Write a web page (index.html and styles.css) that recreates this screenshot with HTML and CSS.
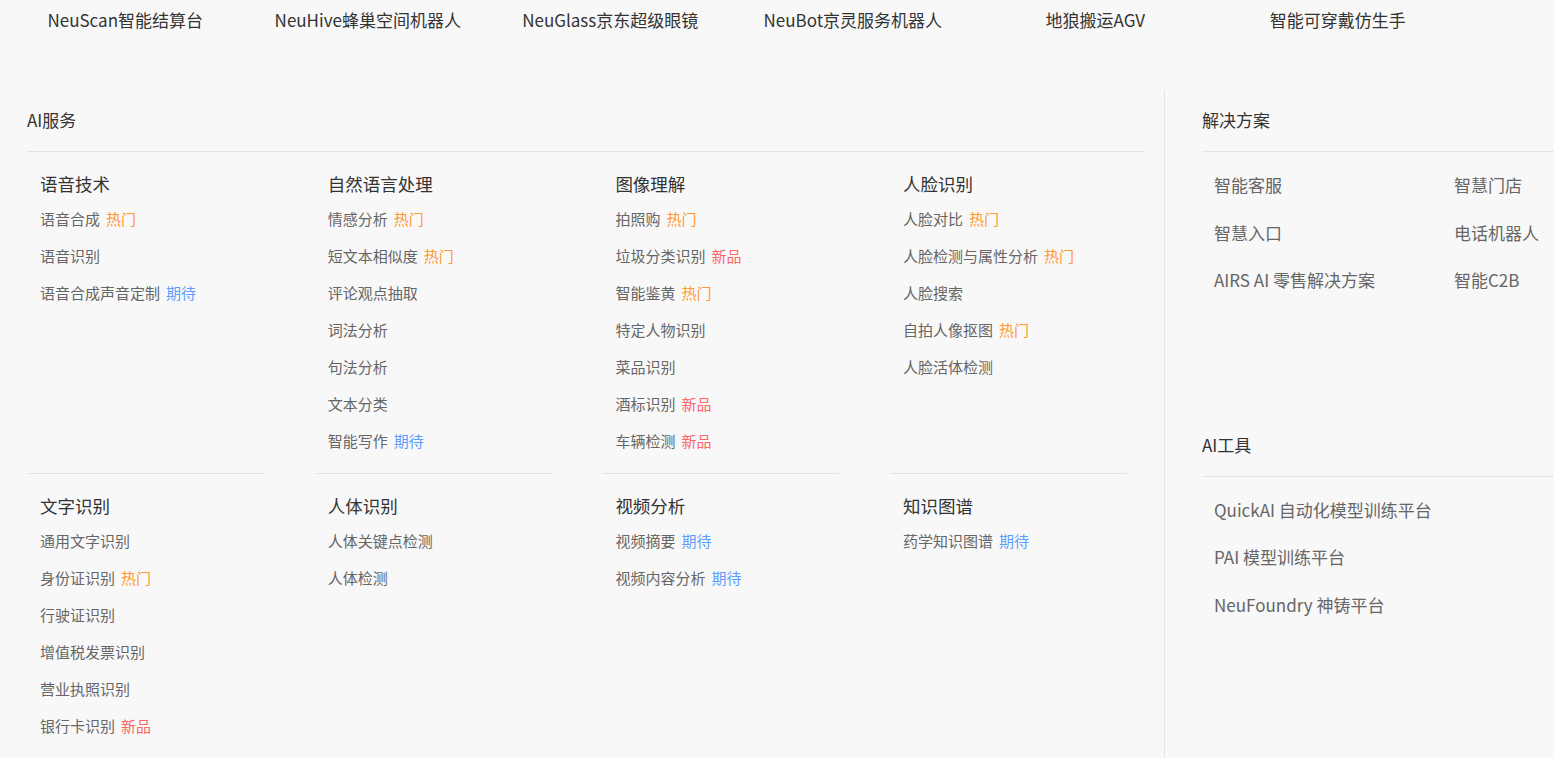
FILE: index.html
```html
<!DOCTYPE html>
<html lang="zh-CN">
<head>
<meta charset="utf-8">
<title>AI</title>
<link rel="stylesheet" href="styles.css">
</head>
<body>
<nav class="topnav">
  <a class="topnav-item">NeuScan智能结算台</a>
  <a class="topnav-item">NeuHive蜂巢空间机器人</a>
  <a class="topnav-item">NeuGlass京东超级眼镜</a>
  <a class="topnav-item">NeuBot京灵服务机器人</a>
  <a class="topnav-item">地狼搬运AGV</a>
  <a class="topnav-item">智能可穿戴仿生手</a>
</nav>
<main class="main">
  <section class="left">
    <h2 class="sec-title">AI服务</h2>
    <div class="grid">
      <div class="cell">
        <h3 class="cat">语音技术</h3>
        <ul class="list">
          <li>语音合成<span class="tag hot">热门</span></li>
          <li>语音识别</li>
          <li>语音合成声音定制<span class="tag wait">期待</span></li>
        </ul>
      </div>
      <div class="cell">
        <h3 class="cat">自然语言处理</h3>
        <ul class="list">
          <li>情感分析<span class="tag hot">热门</span></li>
          <li>短文本相似度<span class="tag hot">热门</span></li>
          <li>评论观点抽取</li>
          <li>词法分析</li>
          <li>句法分析</li>
          <li>文本分类</li>
          <li>智能写作<span class="tag wait">期待</span></li>
        </ul>
      </div>
      <div class="cell">
        <h3 class="cat">图像理解</h3>
        <ul class="list">
          <li>拍照购<span class="tag hot">热门</span></li>
          <li>垃圾分类识别<span class="tag new">新品</span></li>
          <li>智能鉴黄<span class="tag hot">热门</span></li>
          <li>特定人物识别</li>
          <li>菜品识别</li>
          <li>酒标识别<span class="tag new">新品</span></li>
          <li>车辆检测<span class="tag new">新品</span></li>
        </ul>
      </div>
      <div class="cell">
        <h3 class="cat">人脸识别</h3>
        <ul class="list">
          <li>人脸对比<span class="tag hot">热门</span></li>
          <li>人脸检测与属性分析<span class="tag hot">热门</span></li>
          <li>人脸搜索</li>
          <li>自拍人像抠图<span class="tag hot">热门</span></li>
          <li>人脸活体检测</li>
        </ul>
      </div>
    </div>
    <div class="grid grid-last">
      <div class="cell">
        <h3 class="cat">文字识别</h3>
        <ul class="list">
          <li>通用文字识别</li>
          <li>身份证识别<span class="tag hot">热门</span></li>
          <li>行驶证识别</li>
          <li>增值税发票识别</li>
          <li>营业执照识别</li>
          <li>银行卡识别<span class="tag new">新品</span></li>
        </ul>
      </div>
      <div class="cell">
        <h3 class="cat">人体识别</h3>
        <ul class="list">
          <li>人体关键点检测</li>
          <li>人体检测</li>
        </ul>
      </div>
      <div class="cell">
        <h3 class="cat">视频分析</h3>
        <ul class="list">
          <li>视频摘要<span class="tag wait">期待</span></li>
          <li>视频内容分析<span class="tag wait">期待</span></li>
        </ul>
      </div>
      <div class="cell">
        <h3 class="cat">知识图谱</h3>
        <ul class="list">
          <li>药学知识图谱<span class="tag wait">期待</span></li>
        </ul>
      </div>
    </div>
  </section>
  <aside class="right">
    <div class="block">
      <h2 class="sec-title">解决方案</h2>
      <ul class="links links-2col">
        <li>智能客服</li>
        <li>智慧门店</li>
        <li>智慧入口</li>
        <li>电话机器人</li>
        <li>AIRS AI 零售解决方案</li>
        <li>智能C2B</li>
      </ul>
    </div>
    <div class="block block-tools">
      <h2 class="sec-title">AI工具</h2>
      <ul class="links">
        <li>QuickAI 自动化模型训练平台</li>
        <li>PAI 模型训练平台</li>
        <li>NeuFoundry 神铸平台</li>
      </ul>
    </div>
  </aside>
</main>
</body>
</html>
```
FILE: styles.css
```css
html, body {
  margin: 0;
  padding: 0;
  background: #f8f8f8;
  overflow: hidden;
}
body {
  font-family: "Noto Sans CJK SC", "Noto Sans", sans-serif;
  color: #333;
  width: 1554px;
  height: 758px;
}
ul { list-style: none; margin: 0; padding: 0; }
h2, h3 { margin: 0; font-weight: normal; }

.topnav {
  display: flex;
  height: 40px;
  padding-left: 4px;
}
.topnav-item {
  width: 242.5px;
  flex: 0 0 auto;
  text-align: center;
  font-size: 17px;
  line-height: 40px;
  color: #333;
  white-space: nowrap;
}

.main {
  display: flex;
  margin-top: 50px;
  height: 668px;
}
.left {
  flex: 0 0 1117px;
  width: 1117px;
  min-width: 0;
  margin-left: 27px;
  margin-right: 20px;
}
.sec-title {
  font-size: 17px;
  line-height: 24px;
  padding: 18px 0 19px;
  border-bottom: 1px solid #e3e3e3;
  color: #333;
}
.grid {
  display: grid;
  grid-template-columns: repeat(4, 287.7px);
}
.cell {
  width: 237px;
  box-sizing: border-box;
  padding: 20px 0 14px 13px;
  border-bottom: 1px solid #e3e3e3;
}
.grid-last .cell { border-bottom: none; }
.cat {
  font-size: 17.5px;
  line-height: 24px;
  margin-bottom: 4px;
  color: #333;
}
.list li {
  font-size: 15px;
  line-height: 37px;
  color: #666;
  white-space: nowrap;
}
.tag { margin-left: 6px; }
.hot { color: #ff9933; }
.new { color: #ff6666; }
.wait { color: #5c9dff; }

.right {
  flex: 1;
  min-width: 0;
  border-left: 1px solid #e6e6e6;
  padding-left: 37px;
}
.links {
  padding: 9px 0 0 12px;
}
.links li {
  font-size: 17px;
  line-height: 47.5px;
  color: #666;
  white-space: nowrap;
}
.links-2col {
  display: grid;
  grid-template-columns: 240px 1fr;
}
.block-tools { margin-top: 111px; }
```
